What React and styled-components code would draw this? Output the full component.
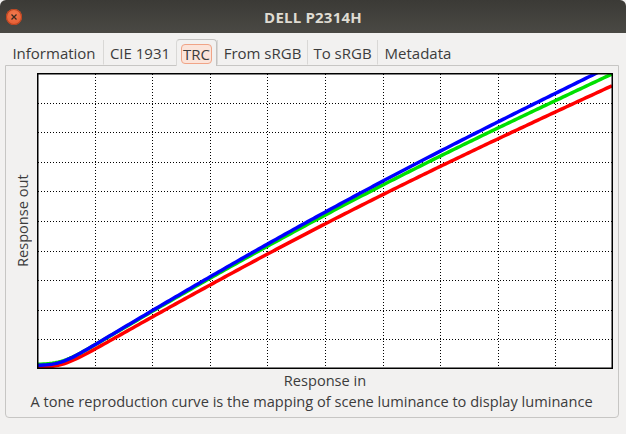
import React from 'react';
import styled, {createGlobalStyle} from 'styled-components';

const GlobalStyle = createGlobalStyle`
  html, body {
    margin: 0;
    padding: 0;
    background: #f2f1f0;
  }
`;

const Window = styled.div`
  width: 626px;
  height: 434px;
  display: flex;
  flex-direction: column;
  background: #f2f1f0;
  font-family: "Open Sans", "Noto Sans", sans-serif;
  color: #3c3c3c;
  overflow: hidden;
`;

const TitleBar = styled.div`
  height: 33px;
  flex: none;
  display: grid;
  grid-template-columns: 1fr auto 1fr;
  align-items: center;
  padding: 0 6px;
  background: linear-gradient(#3b3a36, #4a4944);
  border-radius: 6px 6px 0 0;
`;

const CloseButton = styled.div`
  width: 16px;
  height: 16px;
  border-radius: 50%;
  background: radial-gradient(circle at 50% 35%, #f27a4e, #e0532a);
  box-shadow: inset 0 0 0 1px #b8431f;
  display: flex;
  align-items: center;
  justify-content: center;
`;

const Title = styled.div`
  font-size: 15px;
  font-weight: 700;
  color: #dfdbd2;
  letter-spacing: 0.2px;
`;

const Body = styled.div`
  flex: 1;
  display: flex;
  flex-direction: column;
  padding: 6px 7px 16px 5px;
`;

const TabBar = styled.div`
  display: flex;
  height: 26px;
  align-items: flex-end;
`;

const Tab = styled.div`
  width: ${p => p.$w}px;
  height: ${p => (p.$active ? 27 : 25)}px;
  box-sizing: border-box;
  display: flex;
  align-items: center;
  justify-content: center;
  padding-top: 2px;
  font-size: 15px;
  position: relative;
  ${p => p.$active ? `
    border: 1px solid #c3c2c0;
    border-bottom: none;
    border-radius: 4px 4px 0 0;
    background: #f2f1f0;
    margin-bottom: -1px;
    z-index: 1;
  ` : `
    border-bottom: 1px solid transparent;
    & + & { border-left: 1px solid #d9d8d6; }
  `}
`;

const Focus = styled.span`
  padding: 0 1px;
  line-height: 18px;
  border: 1px solid #f0a487;
  border-radius: 4px;
  background: #fbe4da;
`;

const Panel = styled.div`
  flex: 1;
  border: 1px solid #c7c6c4;
  border-radius: 0 0 4px 4px;
  display: grid;
  grid-template-columns: 31px 576px;
  grid-template-rows: 296px 22px auto;
  padding-top: 7px;
`;

const YLabel = styled.div`
  writing-mode: vertical-rl;
  transform: rotate(180deg);
  font-size: 14.6px;
  display: flex;
  align-items: center;
  justify-content: center;
  padding-right: 1px;
`;

const XLabel = styled.div`
  grid-column: 2;
  font-size: 14.6px;
  text-align: center;
  line-height: 22px;
`;

const Caption = styled.div`
  grid-column: 1 / 3;
  font-size: 14.6px;
  text-align: center;
  padding-left: 4px;
  line-height: 20px;
`;

const tabs = [
  {label: 'Information', w: 98},
  {label: 'CIE 1931', w: 73},
  {label: 'TRC', w: 41, active: true},
  {label: 'From sRGB', w: 90},
  {label: 'To sRGB', w: 70},
  {label: 'Metadata', w: 81},
];

const W = 576;
const H = 296;

// straight response with a slight bow and a soft toe near black
const curve = (a, b, c, floor, s) => x => {
  const lin = a * x + b + c * Math.sin(Math.PI * x) - floor;
  return floor + s * Math.log(1 + Math.exp(lin / s));
};

const series = [
  {color: '#ff0000', f: curve(1.006, -0.046, 0.033, 0.0, 0.018)},
  {color: '#00e000', f: curve(1.036, -0.036, 0.038, 0.012, 0.016)},
  {color: '#0000ff', f: curve(1.066, -0.037, 0.034, 0.008, 0.016)},
];

const pathFor = f => {
  const pts = [];
  for (let i = 0; i <= 200; i++) {
    const x = i / 200;
    pts.push(`${(x * (W - 2) + 1).toFixed(2)},${(H - 1 - f(x) * (H - 2)).toFixed(2)}`);
  }
  return 'M' + pts.join(' L');
};

const Plot = () => (
  <svg width={W} height={H} style={{display: 'block'}}>
    <defs>
      <clipPath id="area">
        <rect x="1" y="1" width={W - 2} height={H - 2} />
      </clipPath>
    </defs>
    <rect x="0" y="0" width={W} height={H} fill="#fff" />
    {Array.from({length: 9}, (_, i) => {
      const x = Math.round(((i + 1) * W) / 10) + 0.5;
      const y = Math.round(((i + 1) * H) / 10) + 0.5;
      return (
        <g key={i} stroke="#000" strokeWidth="1" strokeDasharray="1 2">
          <line x1={x} y1="1" x2={x} y2={H - 1} />
          <line x1="1" y1={y} x2={W - 1} y2={y} />
        </g>
      );
    })}
    <g clipPath="url(#area)" fill="none" strokeWidth="3.5" strokeLinejoin="round">
      {series.map(s => (
        <path key={s.color} d={pathFor(s.f)} stroke={s.color} />
      ))}
    </g>
    <rect x="0.75" y="0.75" width={W - 1.5} height={H - 1.5} fill="none" stroke="#000" strokeWidth="1.5" />
  </svg>
);

export default function App() {
  return (
    <>
      <GlobalStyle />
      <Window>
        <TitleBar>
          <CloseButton>
            <svg width="8" height="8" viewBox="0 0 8 8">
              <path d="M1.5 1.5 L6.5 6.5 M6.5 1.5 L1.5 6.5" stroke="#3a2a20" strokeWidth="1.3" />
            </svg>
          </CloseButton>
          <Title>DELL P2314H</Title>
          <div />
        </TitleBar>
        <Body>
          <TabBar>
            {tabs.map(t => (
              <Tab key={t.label} $w={t.w} $active={t.active}>
                {t.active ? <Focus>{t.label}</Focus> : t.label}
              </Tab>
            ))}
          </TabBar>
          <Panel>
            <YLabel>Response out</YLabel>
            <Plot />
            <XLabel>Response in</XLabel>
            <Caption>A tone reproduction curve is the mapping of scene luminance to display luminance</Caption>
          </Panel>
        </Body>
      </Window>
    </>
  );
}
